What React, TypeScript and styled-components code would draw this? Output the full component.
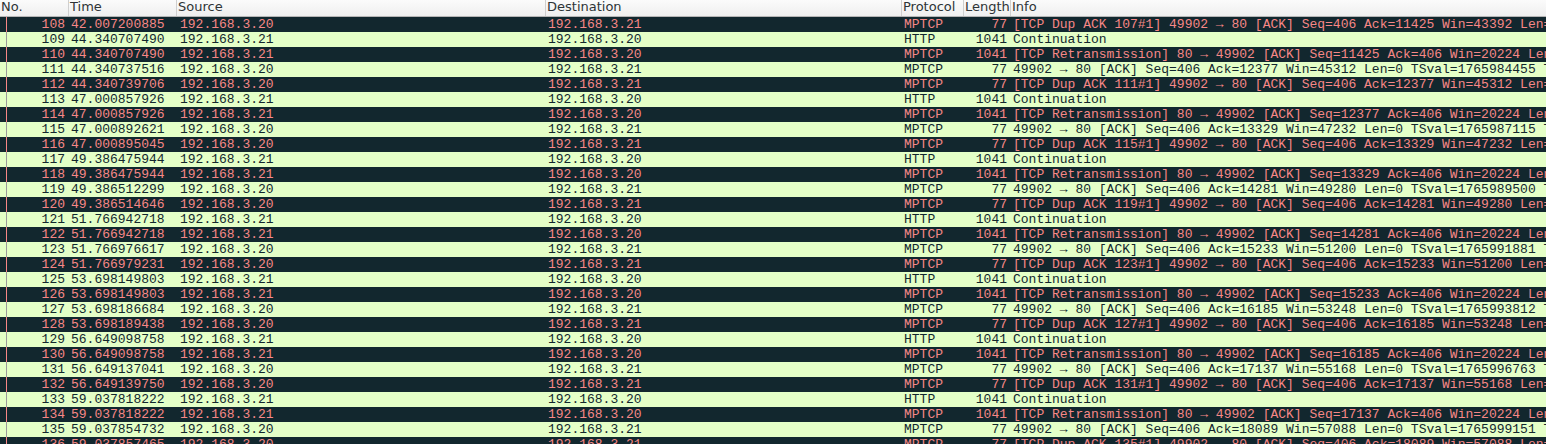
import React from "react";
import styled, { createGlobalStyle } from "styled-components";

const Global = createGlobalStyle`
  html, body { margin: 0; padding: 0; background: #fff; overflow: hidden; }
`;

const COLUMNS = "68px 108px 369px 356px 62px 47px 1fr";

const Page = styled.div`
  width: 1547px;
  height: 444px;
  overflow: hidden;
  box-sizing: border-box;
  padding-right: 1px;
  background: #fff;
`;

const Header = styled.div`
  display: grid;
  grid-template-columns: ${COLUMNS};
  height: 16px;
  box-sizing: content-box;
  background: linear-gradient(#fbfbfb, #efefef);
  border-bottom: 1px solid #b5b5b5;
`;

const HeaderCell = styled.div<{ $first?: boolean }>`
  font: 13px/14px "DejaVu Sans", sans-serif;
  color: #2e3436;
  padding-left: 1px;
  overflow: hidden;
  white-space: nowrap;
  border-left: ${(p) => (p.$first ? "0" : "1px solid #cfcfcf")};
`;

const Row = styled.div<{ $bad: boolean }>`
  position: relative;
  display: grid;
  grid-template-columns: ${COLUMNS};
  height: 15px;
  background: ${(p) => (p.$bad ? "#12272e" : "#e4ffc7")};
  color: ${(p) => (p.$bad ? "#f78787" : "#12272e")};
  font: 13px/15px "Liberation Mono", monospace;
  white-space: pre;
  &::before {
    content: "";
    position: absolute;
    left: 6px;
    top: 0;
    bottom: 0;
    width: 1px;
    background: ${(p) => (p.$bad ? "#f78787" : "#9a9a9a")};
  }
`;

const Cell = styled.div<{ $right?: boolean; $inset?: number }>`
  overflow: hidden;
  padding: 0 3px 0 ${(p) => p.$inset ?? 3}px;
  text-align: ${(p) => (p.$right ? "right" : "left")};
`;

type Pkt = { no: number; time: string; src: string; dst: string; proto: string; len: number; info: string; bad: boolean };

const times = [
  "42.007200885",
  "44.340707490", "44.340707490", "44.340737516", "44.340739706",
  "47.000857926", "47.000857926", "47.000892621", "47.000895045",
  "49.386475944", "49.386475944", "49.386512299", "49.386514646",
  "51.766942718", "51.766942718", "51.766976617", "51.766979231",
  "53.698149803", "53.698149803", "53.698186684", "53.698189438",
  "56.649098758", "56.649098758", "56.649137041", "56.649139750",
  "59.037818222", "59.037818222", "59.037854732", "59.037857465",
];
const tsvals = ["1765984455", "1765987115", "1765989500", "1765991881", "1765993812", "1765996763", "1765999151"];
const wins = [43392, 45312, 47232, 49280, 51200, 53248, 55168, 57088];
const A = "192.168.3.20";
const B = "192.168.3.21";

const dupAck = (n: number, k: number): string =>
  `[TCP Dup ACK ${n}#1] 49902 → 80 [ACK] Seq=406 Ack=${11425 + 952 * k} Win=${wins[k]} Len=0 TSval=1765980000`;

const packets: Pkt[] = [
  { no: 108, time: times[0], src: A, dst: B, proto: "MPTCP", len: 77, info: dupAck(107, 0), bad: true },
];
for (let k = 0; k < 7; k++) {
  const base = 109 + k * 4;
  const seq = 11425 + 952 * k;
  const t = k * 4 + 1;
  packets.push(
    { no: base, time: times[t], src: B, dst: A, proto: "HTTP", len: 1041, info: "Continuation", bad: false },
    { no: base + 1, time: times[t + 1], src: B, dst: A, proto: "MPTCP", len: 1041, info: `[TCP Retransmission] 80 → 49902 [ACK] Seq=${seq} Ack=406 Win=20224 Len=952 TSval=1`, bad: true },
    { no: base + 2, time: times[t + 2], src: A, dst: B, proto: "MPTCP", len: 77, info: `49902 → 80 [ACK] Seq=406 Ack=${seq + 952} Win=${wins[k + 1]} Len=0 TSval=${tsvals[k]} TSecr=1`, bad: false },
    { no: base + 3, time: times[t + 3], src: A, dst: B, proto: "MPTCP", len: 77, info: dupAck(base + 2, k + 1), bad: true },
  );
}

export default function App() {
  return (
    <Page>
      <Global />
      <Header>
        <HeaderCell $first>No.</HeaderCell>
        <HeaderCell>Time</HeaderCell>
        <HeaderCell>Source</HeaderCell>
        <HeaderCell>Destination</HeaderCell>
        <HeaderCell>Protocol</HeaderCell>
        <HeaderCell>Length</HeaderCell>
        <HeaderCell>Info</HeaderCell>
      </Header>
      {packets.map((p) => (
        <Row key={p.no} $bad={p.bad}>
          <Cell $right>{p.no}</Cell>
          <Cell>{p.time}</Cell>
          <Cell $inset={4}>{p.src}</Cell>
          <Cell>{p.dst}</Cell>
          <Cell>{p.proto}</Cell>
          <Cell $right>{p.len}</Cell>
          <Cell>{p.info}</Cell>
        </Row>
      ))}
    </Page>
  );
}
